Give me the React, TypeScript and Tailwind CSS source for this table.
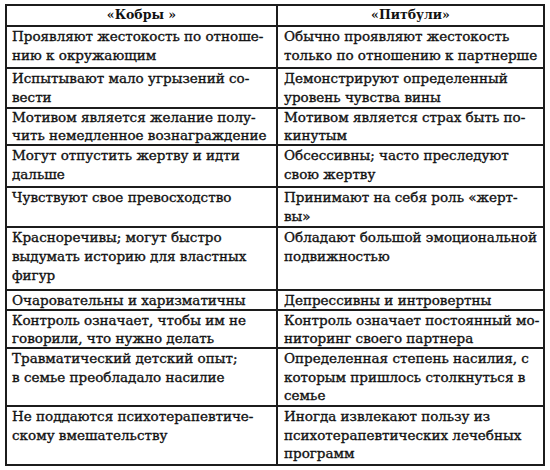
import React from "react";

type Row = { h: string; lh?: string; left: string[]; right: string[] };

const rows: Row[] = [
  { h: "h-[42px]", left: ["Проявляют жестокость по отноше-", "нию к окружающим"], right: ["Обычно проявляют жестокость", "только по отношению к партнерше"] },
  { h: "h-[40px]", left: ["Испытывают мало угрызений со-", "вести"], right: ["Демонстрируют определенный", "уровень чувства вины"] },
  { h: "h-[37px]", lh: "leading-[17.5px]", left: ["Мотивом является желание полу-", "чить немедленное вознаграждение"], right: ["Мотивом является страх быть по-", "кинутым"] },
  { h: "h-[42px]", left: ["Могут отпустить жертву и идти", "дальше"], right: ["Обсессивны; часто преследуют", "свою жертву"] },
  { h: "h-[40px]", left: ["Чувствуют свое превосходство"], right: ["Принимают на себя роль «жерт-", "вы»"] },
  { h: "h-[63px]", left: ["Красноречивы; могут быстро", "выдумать историю для властных", "фигур"], right: ["Обладают большой эмоциональной", "подвижностью"] },
  { h: "h-[20px]", lh: "leading-[18px]", left: ["Очаровательны и харизматичны"], right: ["Депрессивны и интровертны"] },
  { h: "h-[38px]", lh: "leading-[18px]", left: ["Контроль означает, чтобы им не", "говорили, что нужно делать"], right: ["Контроль означает постоянный мо-", "ниторинг своего партнера"] },
  { h: "h-[58px]", lh: "leading-[18.5px]", left: ["Травматический детский опыт;", "в семье преобладало насилие"], right: ["Определенная степень насилия, с", "которым пришлось столкнуться в", "семье"] },
  { h: "h-[57px]", lh: "leading-[18.5px]", left: ["Не поддаются психотерапевтиче-", "скому вмешательству"], right: ["Иногда извлекают пользу из", "психотерапевтических лечебных", "программ"] },
];

function Cell({ lines, right, lh }: { lines: string[]; right?: boolean; lh: string }) {
  return (
    <div className={right ? "pl-[6px] overflow-hidden" : "pl-[5px] border-r-2 border-[#1c1c1c] overflow-hidden"}>
      {lines.map((l, i) => (
        <div key={i} className={`whitespace-nowrap ${lh}`}>
          {l}
        </div>
      ))}
    </div>
  );
}

export default function App() {
  return (
    <div className="w-[550px] h-[470px] bg-white pt-[4px] pl-[5px]" style={{ fontFamily: '"DejaVu Serif", "Liberation Serif", serif' }}>
      <div className="w-[540px] border-2 border-[#1c1c1c] text-[13.5px] text-[#111] [-webkit-text-stroke:0.35px_#111]">
        <div className="grid grid-cols-[271px_1fr] h-[21px] border-b-2 border-[#1c1c1c] font-bold text-[12.5px] [-webkit-text-stroke:0px]">
          <div className="text-center leading-[18px] border-r-2 border-[#1c1c1c]">«Кобры »</div>
          <div className="text-center leading-[18px]">«Питбули»</div>
        </div>
        {rows.map((r, i) => (
          <div key={i} className={`grid grid-cols-[271px_1fr] ${r.h} ${i < rows.length - 1 ? "border-b-2 border-[#1c1c1c]" : ""}`}>
            <Cell lines={r.left} lh={r.lh ?? "leading-[19px]"} />
            <Cell lines={r.right} lh={r.lh ?? "leading-[19px]"} right />
          </div>
        ))}
      </div>
    </div>
  );
}
